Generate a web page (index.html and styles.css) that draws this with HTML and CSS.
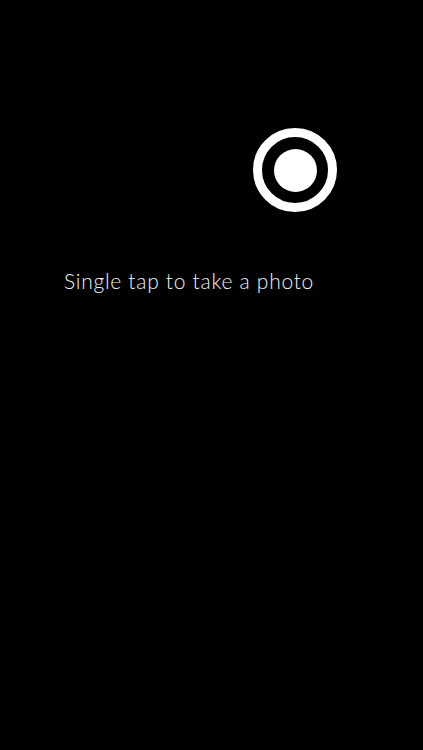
FILE: index.html
```html
<!DOCTYPE html>
<html>
<head>
<meta charset="utf-8">
<link rel="stylesheet" href="styles.css">
</head>
<body>
<main class="screen">
  <div class="shutter-row">
    <div class="shutter"><div class="shutter-dot"></div></div>
  </div>
  <p class="hint">Single tap to take a photo</p>
</main>
</body>
</html>
```
FILE: styles.css
```css
html, body {
  margin: 0;
  padding: 0;
  background: #000;
  height: 100%;
}
.screen {
  height: 750px;
  background: #000;
  display: flex;
  flex-direction: column;
  padding-top: 128px;
  box-sizing: border-box;
}
.shutter-row {
  display: flex;
  padding-left: 253px;
}
.shutter {
  width: 84px;
  height: 84px;
  box-sizing: border-box;
  border: 9px solid #fff;
  border-radius: 50%;
  display: flex;
  align-items: center;
  justify-content: center;
}
.shutter-dot {
  width: 43px;
  height: 43px;
  border-radius: 50%;
  background: #fff;
}
.hint {
  margin: 56px 0 0 64px;
  font-family: Lato, "Noto Sans", sans-serif;
  font-weight: 300;
  font-size: 21px;
  line-height: 26px;
  letter-spacing: 0.72px;
  color: #f2f2f2;
}
```
